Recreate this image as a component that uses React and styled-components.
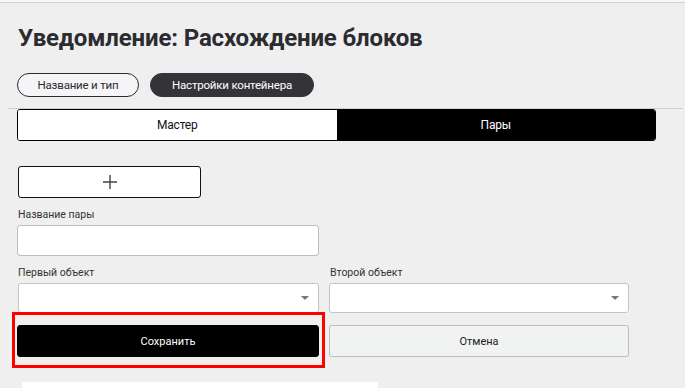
import React from "react";
import styled, { createGlobalStyle } from "styled-components";

const Global = createGlobalStyle`
  html, body { margin: 0; padding: 0; background: #efefef; }
  body { font-family: Roboto, "Noto Sans", "Liberation Sans", sans-serif; color: #222; }
  * { box-sizing: border-box; }
`;

const Page = styled.div`
  min-height: 388px;
  background: #efefef;
  border-top: 2px solid #f7f7f7;
  overflow: hidden;
`;

const TopLine = styled.div`
  height: 1px;
  background: #d2d2d2;
`;

const Header = styled.div`
  padding: 21px 17px 11px 17px;
`;

const Title = styled.h1`
  margin: 0 0 0 1px;
  font-size: 24px;
  line-height: 28px;
  font-weight: 700;
  color: #2b2b30;
  letter-spacing: -0.15px;
`;

const Pills = styled.div`
  display: flex;
  gap: 11px;
  margin-top: 21px;
`;

const Pill = styled.button`
  width: ${(p) => p.$w}px;
  height: 24px;
  padding: 0;
  border-radius: 12px;
  border: 1px solid ${(p) => (p.$active ? "#333338" : "#2b2b30")};
  background: ${(p) => (p.$active ? "#333338" : "#f5f5f7")};
  color: ${(p) => (p.$active ? "#fff" : "#2b2b30")};
  font-family: inherit;
  font-size: 11.5px;
  letter-spacing: -0.2px;
  line-height: 22px;
  cursor: pointer;
`;

const Divider = styled.div`
  height: 1px;
  background: #cfcfcf;
  margin: 0 2px 0 8px;
`;

const Content = styled.div`
  padding: 0 17px;
`;

const Tabs = styled.div`
  display: grid;
  grid-template-columns: 1fr 1fr;
  width: 639px;
  height: 32px;
  border: 1px solid #000;
  border-radius: 3px;
  overflow: hidden;
`;

const Tab = styled.div`
  display: flex;
  align-items: center;
  justify-content: center;
  background: ${(p) => (p.$active ? "#000" : "#fff")};
  color: ${(p) => (p.$active ? "#fff" : "#111")};
  font-size: 12px;
  letter-spacing: -0.2px;
`;

const AddButton = styled.button`
  display: flex;
  align-items: center;
  justify-content: center;
  width: 183px;
  height: 32px;
  margin: 25px 0 0 1px;
  background: #fff;
  border: 1px solid #111;
  border-radius: 3px;
  cursor: pointer;
`;

const Form = styled.div`
  display: grid;
  grid-template-columns: 302px 300px;
  column-gap: 10px;
  margin-top: 10px;
`;

const Field = styled.div`
  display: flex;
  flex-direction: column;
  grid-column: ${(p) => p.$span || "auto"};
  margin-bottom: ${(p) => p.$mb || 0}px;
`;

const Label = styled.label`
  font-size: 10.5px;
  line-height: 13px;
  color: #333;
  margin: 0 0 4px 1px;
`;

const Input = styled.input`
  width: 302px;
  height: 31px;
  border: 1px solid #bdbdbd;
  border-radius: 3px;
  background: #fff;
  outline: none;
`;

const SelectBox = styled.div`
  position: relative;
  height: 30px;
  border: 1px solid #c4c4c4;
  border-radius: 3px;
  background: #fff;
  margin-left: ${(p) => p.$ml || 0}px;
`;

const Arrow = styled.span`
  position: absolute;
  right: 9px;
  top: 12px;
  width: 0;
  height: 0;
  border-left: 4px solid transparent;
  border-right: 4px solid transparent;
  border-top: 4px solid #777;
`;

const Actions = styled.div`
  display: grid;
  grid-template-columns: 302px 300px;
  column-gap: 10px;
  margin-top: 12px;
`;

const Highlight = styled.div`
  position: relative;
  &::after {
    content: "";
    position: absolute;
    left: -5px;
    right: -6px;
    top: -13px;
    bottom: -11px;
    border: 3px solid #f00;
    pointer-events: none;
  }
`;

const ActionButton = styled.button`
  width: 100%;
  height: 32px;
  border-radius: 3px;
  border: 1px solid ${(p) => (p.$primary ? "#000" : "#bdbdbd")};
  background: ${(p) => (p.$primary ? "#000" : "#f1f2f2")};
  color: ${(p) => (p.$primary ? "#fff" : "#222")};
  font-family: inherit;
  font-size: 11px;
  cursor: pointer;
`;

const BottomCard = styled.div`
  width: 356px;
  height: 20px;
  margin: 25px 0 0 5px;
  background: #fff;
`;

export default function App() {
  return (
    <>
      <Global />
      <Page>
        <TopLine />
        <Header>
          <Title>Уведомление: Расхождение блоков</Title>
          <Pills>
            <Pill $w={122}>Название и тип</Pill>
            <Pill $active $w={164}>Настройки контейнера</Pill>
          </Pills>
        </Header>
        <Divider />
        <Content>
          <Tabs>
            <Tab>Мастер</Tab>
            <Tab $active>Пары</Tab>
          </Tabs>
          <AddButton aria-label="Добавить">
            <svg width="16" height="16" viewBox="0 0 16 16">
              <path d="M8 1v14M1 8h14" stroke="#444" strokeWidth="1.4" fill="none" />
            </svg>
          </AddButton>
          <Form>
            <Field $span="1 / 3" $mb={10}>
              <Label>Название пары</Label>
              <Input />
            </Field>
            <Field>
              <Label>Первый объект</Label>
              <SelectBox $ml={1}>
                <Arrow />
              </SelectBox>
            </Field>
            <Field>
              <Label>Второй объект</Label>
              <SelectBox>
                <Arrow />
              </SelectBox>
            </Field>
          </Form>
          <Actions>
            <Highlight>
              <ActionButton $primary>Сохранить</ActionButton>
            </Highlight>
            <ActionButton>Отмена</ActionButton>
          </Actions>
          <BottomCard />
        </Content>
      </Page>
    </>
  );
}
